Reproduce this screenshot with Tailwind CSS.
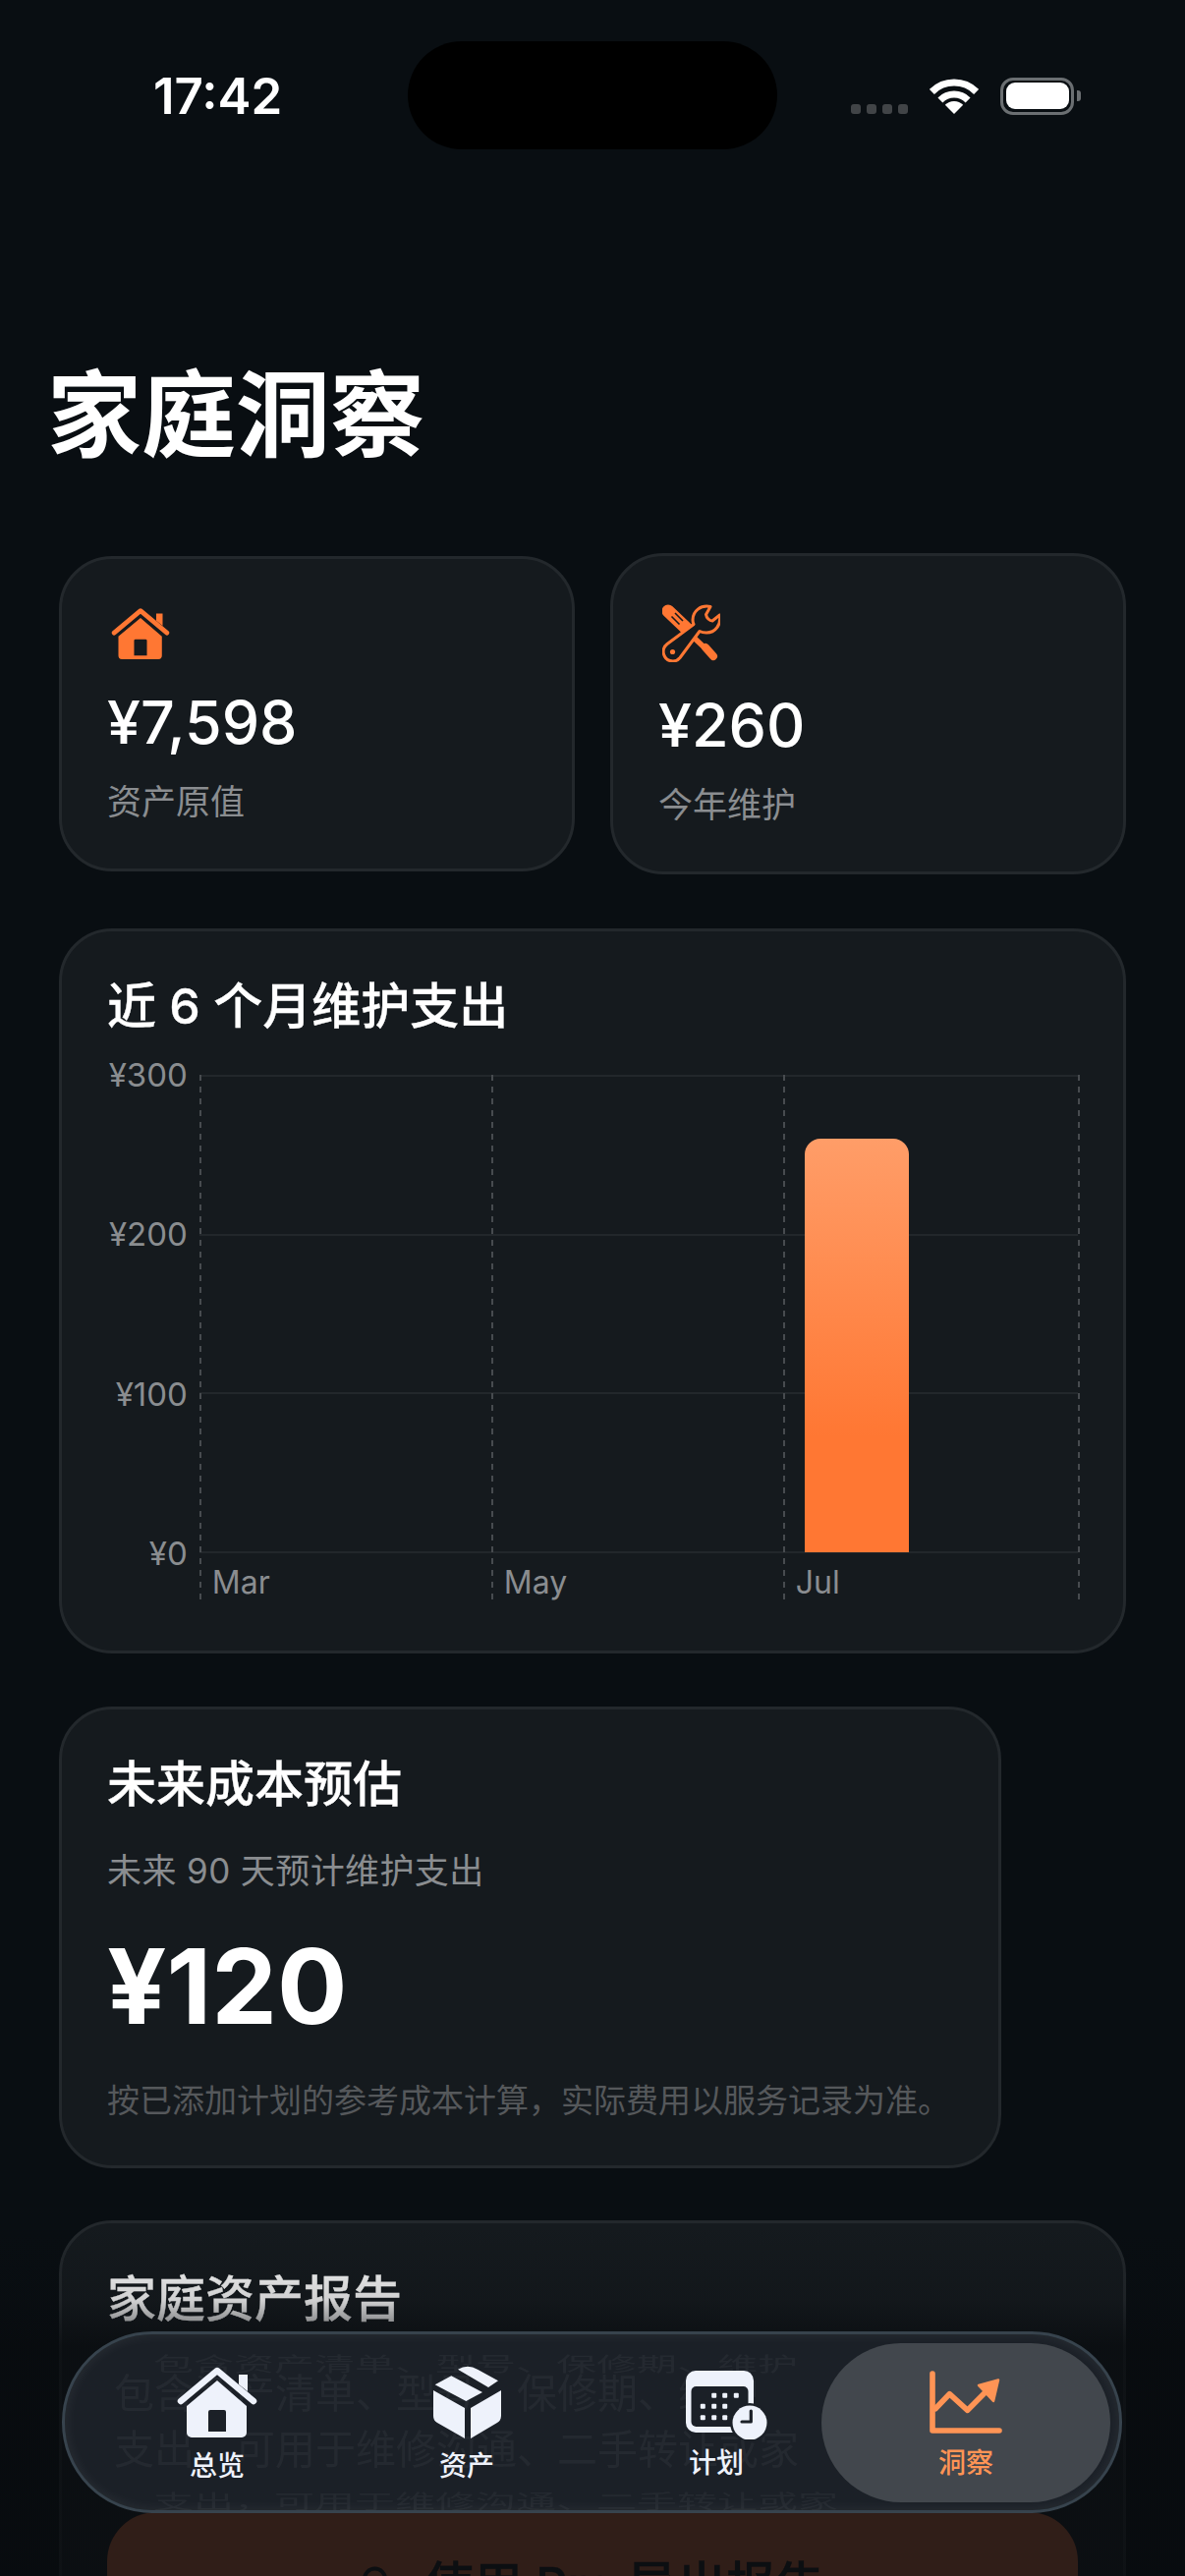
<!DOCTYPE html>
<html lang="zh-CN">
<head>
    <meta charset="UTF-8">
    <meta name="viewport" content="width=device-width, initial-scale=1.0">
    <title>家庭洞察</title>
    <script src="https://cdn.jsdelivr.net/npm/@tailwindcss/browser@4"></script>
</head>
<body class="relative h-[2622px] w-[1206px] overflow-hidden bg-[#090e12] text-white font-['Inter','Noto_Sans_CJK_SC',sans-serif]">
    <!-- Status bar -->
    <div class="relative flex h-[195px] items-center justify-between pl-[156px] pr-[106px]">
        <span class="text-[51px] font-semibold leading-none">17:42</span>
        <div class="absolute left-[415px] top-[42px] h-[110px] w-[376px] rounded-[55px] bg-black"></div>
        <div class="flex items-end gap-[22px]">
            <div class="mb-[1px] flex gap-[6px]">
                <span class="size-[10px] rounded-[3px] bg-[#414447]"></span>
                <span class="size-[10px] rounded-[3px] bg-[#414447]"></span>
                <span class="size-[10px] rounded-[3px] bg-[#414447]"></span>
                <span class="size-[10px] rounded-[3px] bg-[#414447]"></span>
            </div>
            <svg width="50" height="37" viewBox="0 0 50 37" fill="none" stroke="white" stroke-width="7">
                <path d="M2.4 13.4A32 32 0 0 1 47.6 13.4"/>
                <path d="M10.9 21.9A20 20 0 0 1 39.1 21.9"/>
                <path d="M25 36L15.8 26.8A13 13 0 0 1 34.2 26.8Z" fill="white" stroke="none"/>
            </svg>
            <div class="flex items-center gap-[3px]">
                <div class="flex h-[38px] w-[75px] items-center justify-center rounded-[13px] border-[3px] border-[#6b6f72]">
                    <div class="h-[27px] w-[64px] rounded-[9px] bg-white"></div>
                </div>
                <div class="h-[11px] w-[4px] rounded-r-[3px] bg-[#6b6f72]"></div>
            </div>
        </div>
    </div>

    <!-- Title -->
    <h1 class="mt-[172px] pl-[48px] text-[96px] font-bold leading-[110px]">家庭洞察</h1>

    <main class="mt-[86px] flex flex-col gap-[54px] px-[60px]">
        <!-- Summary -->
        <div class="mb-[1px] flex items-center gap-[36px]">
            <div class="flex-1 rounded-[54px] border-[3px] border-[#23282c] bg-[#151a1e] px-[46px] pb-[44px] pt-[49px]">
                <svg class="ml-[4px]" width="60" height="53" viewBox="0 0 82 73" fill="#ff7733">
                    <path d="M4 36L41 5L78 36" fill="none" stroke="#ff7733" stroke-width="6.5" stroke-linecap="round" stroke-linejoin="round"/>
                    <path d="M63 9h9v17l-9-7z"/>
                    <path fill-rule="evenodd" d="M41 15L71 41V68a5 5 0 0 1-5 5H15a5 5 0 0 1-5-5V41ZM32 47a2 2 0 0 1 2-2h14a2 2 0 0 1 2 2V68H32Z"/>
                </svg>
                <div class="mt-[28px] text-[61px] font-medium leading-[72px]">¥7,598</div>
                <div class="mt-[21px] text-[35px] leading-[48px] text-[#8a8d90]">资产原值</div>
            </div>
            <div class="flex-1 rounded-[54px] border-[3px] border-[#23282c] bg-[#151a1e] px-[46px] pb-[44px] pt-[49px]">
                <svg class="ml-[4px]" width="59" height="59" viewBox="15 11 59 59" fill="none">
                    <path d="M21 18L41 37" stroke="#ff7733" stroke-width="13" stroke-linecap="round"/>
                    <path d="M25 21L33 29M21.5 24.5L29.5 32.5" stroke="#151a1e" stroke-width="1.6" transform="translate(3 -1)"/>
                    <path d="M45 43L62 59" stroke="#ff7733" stroke-width="5.5"/>
                    <path d="M59 55L67 64" stroke="#ff7733" stroke-width="8" stroke-linecap="round"/>
                    <path d="M64 13.5C54 11.5 46 18 46 27C46 29 46.3 30 47 31.5L20 51.5C13 57 16 69 26 69C29 69 31 68 33 65.5L53 38.5C55 39.5 57 40 60 40C69 40 75 32 73.5 22L66 28C63 28 60 25 59.5 21.5Z" fill="#151a1e" stroke="#ff7733" stroke-width="3" stroke-linejoin="round"/>
                    <circle cx="25.5" cy="59.5" r="2.6" fill="#ff7733"/>
                </svg>
                <div class="mt-[28px] text-[61px] font-medium leading-[72px]">¥260</div>
                <div class="mt-[21px] text-[35px] leading-[48px] text-[#8a8d90]">今年维护</div>
            </div>
        </div>

        <!-- Chart -->
        <section class="rounded-[54px] border-[3px] border-[#23282c] bg-[#151a1e] px-[46px] pb-[51px] pt-[46px]">
            <h2 class="text-[50px] font-medium leading-[60px] [-webkit-text-stroke:0.35px_#fff]">近 6 个月维护支出</h2>
            <div class="mt-[20px] flex gap-[12px]">
                <div class="flex h-[527px] w-[82px] flex-col items-end justify-between text-[33px] leading-[40px] text-[#8a8d90]">
                    <span>¥300</span>
                    <span>¥200</span>
                    <span>¥100</span>
                    <span>¥0</span>
                </div>
                <div class="relative mt-[20px] h-[535px] w-[896px]">
                    <div class="absolute inset-x-0 top-0 flex h-[487px] flex-col justify-between">
                        <div class="h-[2px] bg-[#22272b]"></div>
                        <div class="h-[2px] bg-[#22272b]"></div>
                        <div class="h-[2px] bg-[#22272b]"></div>
                        <div class="h-[2px] bg-[#22272b]"></div>
                    </div>
                    <div class="absolute inset-0 grid grid-cols-[297px_297px_300px_2px]">
                        <div class="bg-[repeating-linear-gradient(to_bottom,#474b4f_0,#474b4f_6px,transparent_6px,transparent_12px)] bg-[length:2px_100%] bg-no-repeat pl-[13px] pt-[497px] text-[32px] leading-[40px] text-[#8a8d90]">Mar</div>
                        <div class="bg-[repeating-linear-gradient(to_bottom,#474b4f_0,#474b4f_6px,transparent_6px,transparent_12px)] bg-[length:2px_100%] bg-no-repeat pl-[13px] pt-[497px] text-[32px] leading-[40px] text-[#8a8d90]">May</div>
                        <div class="relative bg-[repeating-linear-gradient(to_bottom,#474b4f_0,#474b4f_6px,transparent_6px,transparent_12px)] bg-[length:2px_100%] bg-no-repeat pl-[13px] pt-[497px] text-[32px] leading-[40px] text-[#8a8d90]">
                            Jul
                            <div class="absolute left-[22px] top-[65px] h-[421px] w-[106px] rounded-t-[16px] bg-[linear-gradient(to_bottom,#ff9d68,#ff7733_72%)]"></div>
                        </div>
                        <div class="bg-[repeating-linear-gradient(to_bottom,#474b4f_0,#474b4f_6px,transparent_6px,transparent_12px)] bg-no-repeat"></div>
                    </div>
                </div>
            </div>
        </section>

        <!-- Forecast -->
        <section class="w-[959px] rounded-[54px] border-[3px] border-[#23282c] bg-[#151a1e] px-[46px] pb-[44px] pt-[46px]">
            <h2 class="text-[50px] font-medium leading-[60px] [-webkit-text-stroke:0.35px_#fff]">未来成本预估</h2>
            <p class="mt-[34px] text-[35px] leading-[48px] tracking-[0.4px] text-[#8a8d90]">未来 90 天预计维护支出</p>
            <div class="mt-[34px] text-[106px] font-bold leading-[120px]">¥120</div>
            <p class="mt-[34px] text-[33px] leading-[44px] text-[#55585b]">按已添加计划的参考成本计算，实际费用以服务记录为准。</p>
        </section>

        <!-- Report -->
        <section class="-mt-[1px] rounded-t-[54px] border-[3px] border-[#23282c] bg-[#151a1e] px-[46px] pb-[44px] pt-[47px]">
            <h2 class="text-[50px] font-medium leading-[60px] [-webkit-text-stroke:0.35px_#fff]">家庭资产报告</h2>
            <button class="relative z-10 mt-[187px] flex h-[148px] w-full items-center justify-center gap-[36px] rounded-[50px] bg-[#301e18] text-[50px] font-medium text-[#0c0f12] [-webkit-text-stroke:0.35px_#0c0f12]">
                <svg width="29" height="40" viewBox="0 0 29 40" fill="none" stroke="#0c0f12" stroke-width="4">
                    <path d="M4 40V14a10.5 10.5 0 0 1 21 0V40"/>
                </svg>
                <span>使用 Pro 导出报告</span>
            </button>
        </section>
    </main>

    <!-- Fade under the tab bar -->
    <div class="pointer-events-none absolute inset-x-0 bottom-0 h-[360px] bg-[linear-gradient(to_bottom,transparent,rgba(8,11,14,0.25)_22%,#080b0e_35%,#080b0e)] opacity-75"></div>

    <!-- Tab bar -->
    <nav class="absolute left-[63px] top-[2373px] z-20 h-[185px] w-[1079px] rounded-[92px] border-[3px] border-[#37434d] bg-[#1b2027] shadow-[inset_0_0_14px_rgba(255,255,255,0.07)]">
        <div class="absolute inset-0 overflow-hidden rounded-[90px] text-[41px] font-normal leading-none text-white/[0.045] blur-[0.6px]">
            <div class="absolute left-[90px] top-[10px] origin-left scale-y-50 whitespace-nowrap">包含资产清单、型号、保修期、维护</div>
            <div class="absolute left-[50px] top-[40px] whitespace-nowrap">包含资产清单、型号、保修期、维护</div>
            <div class="absolute left-[50px] top-[97px] whitespace-nowrap">支出，可用于维修沟通、二手转让或家</div>
            <div class="absolute left-[90px] top-[150px] origin-left scale-y-50 whitespace-nowrap">支出，可用于维修沟通、二手转让或家</div>
        </div>
        <div class="relative ml-[28px] grid h-full w-[1016px] grid-cols-4 text-[28px] font-medium leading-[34px] text-[#eef2fb]">
            <a href="#" class="flex flex-col items-center pt-[32px]">
                <svg width="82" height="73" viewBox="0 0 82 73" fill="#eef2fb">
                    <path d="M4 36L41 5L78 36" fill="none" stroke="#eef2fb" stroke-width="6.5" stroke-linecap="round" stroke-linejoin="round"/>
                    <path d="M63 9h9v17l-9-7z"/>
                    <path fill-rule="evenodd" d="M41 15L71 41V68a5 5 0 0 1-5 5H15a5 5 0 0 1-5-5V41ZM32 47a2 2 0 0 1 2-2h14a2 2 0 0 1 2 2V67H32Z"/>
                </svg>
                <span class="mt-[12px]">总览</span>
            </a>
            <a href="#" class="flex flex-col items-center pt-[32px]">
                <svg width="71" height="74" viewBox="0 0 71 74" fill="#eef2fb">
                    <path d="M1 25L33 43V74L5 58Q1 56 1 51Z"/>
                    <path d="M70 25V51Q70 56 66 58L39 74V43Z"/>
                    <path d="M2.7 19.3L19.3 10.3L51 27L34.3 36Z"/>
                    <path d="M26 3.7Q36 -2 46 3.7L67 15.3L57 22Z"/>
                </svg>
                <span class="mt-[11px]">资产</span>
            </a>
            <a href="#" class="flex flex-col items-center pt-[37px]">
                <svg class="translate-x-[10px]" width="83" height="70" viewBox="0 0 83 70">
                    <rect width="69" height="63" rx="10" fill="#eef2fb"/>
                    <rect x="5.5" y="16" width="58" height="41" rx="5" fill="#1b2027"/>
                    <g fill="#eef2fb">
                        <rect x="26.2" y="22.8" width="5" height="5" rx="1"/><rect x="37.2" y="22.8" width="5" height="5" rx="1"/><rect x="48.8" y="22.8" width="5" height="5" rx="1"/>
                        <rect x="14.8" y="33.8" width="5" height="5" rx="1"/><rect x="26.2" y="33.8" width="5" height="5" rx="1"/><rect x="37.2" y="33.8" width="5" height="5" rx="1"/>
                        <rect x="14.8" y="45.2" width="5" height="5" rx="1"/><rect x="26.2" y="45.2" width="5" height="5" rx="1"/><rect x="37.2" y="45.2" width="5" height="5" rx="1"/>
                    </g>
                    <circle cx="65" cy="53" r="20" fill="#1b2027"/>
                    <circle cx="65" cy="53" r="17.5" fill="#eef2fb"/>
                    <path d="M66.3 41V52H57" fill="none" stroke="#1b2027" stroke-width="3.2" stroke-linecap="round" stroke-linejoin="round"/>
                </svg>
                <span class="mt-[7px]">计划</span>
            </a>
            <a href="#" class="relative flex flex-col items-center pt-[37px] text-[#ff9455]">
                <div class="absolute -inset-x-[20px] bottom-[8px] top-[9px] rounded-[81px] bg-[#42474d]"></div>
                <svg class="relative" width="74" height="64" viewBox="0 0 74 64" fill="none" stroke="#ff9455" stroke-width="5.6" stroke-linecap="round" stroke-linejoin="round">
                    <path d="M3 3V61H71"/>
                    <path d="M6 38.7L20.3 23.7L38.7 40.3L60 18.7"/>
                    <path d="M70 9.5L50 15L65 31Z" fill="#ff9455" stroke-width="2.5"/>
                </svg>
                <span class="relative mt-[13px]">洞察</span>
            </a>
        </div>
    </nav>
</body>
</html>
